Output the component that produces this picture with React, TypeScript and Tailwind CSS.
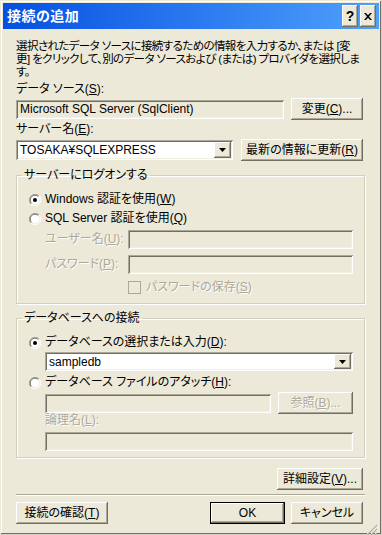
import React from "react";

const raised =
  "shadow-[inset_-1px_-1px_#716F64,inset_1px_1px_#fff,inset_-2px_-2px_#ACA899]";
const raisedDefault =
  "shadow-[inset_0_0_0_1px_#000,inset_-2px_-2px_#716F64,inset_2px_2px_#fff,inset_-3px_-3px_#ACA899]";
const sunken =
  "shadow-[inset_1px_1px_#ACA899,inset_-1px_-1px_#fff,inset_2px_2px_#716F64,inset_-2px_-2px_#F1EFE2]";
const disabledText = "text-[#ACA899] [text-shadow:1px_1px_#fff]";

function Btn({
  children,
  className = "",
  isDefault = false,
  disabled = false,
}: {
  children: React.ReactNode;
  className?: string;
  isDefault?: boolean;
  disabled?: boolean;
}) {
  return (
    <div
      className={`flex h-[22px] shrink-0 items-center justify-center whitespace-nowrap bg-[#ECE9D8] leading-none ${
        isDefault ? raisedDefault : raised
      } ${disabled ? disabledText : ""} ${className}`}
    >
      {children}
    </div>
  );
}

function Field({
  children,
  className = "",
  white = false,
}: {
  children?: React.ReactNode;
  className?: string;
  white?: boolean;
}) {
  return (
    <div
      className={`flex h-[19px] shrink-0 items-center overflow-hidden whitespace-nowrap pl-[4px] leading-none ${sunken} ${
        white ? "bg-white" : "bg-[#ECE9D8]"
      } ${className}`}
    >
      {children}
    </div>
  );
}

function Combo({ value, className = "" }: { value: string; className?: string }) {
  return (
    <div className={`flex h-[20px] shrink-0 items-center bg-white p-[2px] ${sunken} ${className}`}>
      <span className="flex-1 pl-[2px] leading-none">{value}</span>
      <div className={`flex h-full w-[17px] items-center justify-center bg-[#ECE9D8] ${raised}`}>
        <svg width="7" height="4" viewBox="0 0 7 4">
          <path d="M0 0h7L3.5 4z" fill="#000" />
        </svg>
      </div>
    </div>
  );
}

function Radio({ checked = false }: { checked?: boolean }) {
  return (
    <svg width="12" height="12" viewBox="0 0 12 12" className="shrink-0">
      <circle cx="6" cy="6" r="5" fill="#fff" />
      <path d="M1.9 10.1A5.8 5.8 0 0 1 10.1 1.9" fill="none" stroke="#ACA899" strokeWidth="1" />
      <path d="M2.6 9.4A4.8 4.8 0 0 1 9.4 2.6" fill="none" stroke="#716F64" strokeWidth="1" />
      <path d="M10.1 1.9A5.8 5.8 0 0 1 1.9 10.1" fill="none" stroke="#fff" strokeWidth="1" />
      <path d="M9.4 2.6A4.8 4.8 0 0 1 2.6 9.4" fill="none" stroke="#F1EFE2" strokeWidth="1" />
      {checked && <circle cx="6" cy="6" r="2" fill="#000" />}
    </svg>
  );
}

function Group({
  title,
  className = "",
  children,
}: {
  title: string;
  className?: string;
  children: React.ReactNode;
}) {
  return (
    <fieldset
      className={`shrink-0 border border-[#D0D0BF] shadow-[inset_1px_1px_#fff,1px_1px_#fff] ${className}`}
    >
      <legend className="ml-[5px] h-[13px] px-[2px] leading-[13px]">{title}</legend>
      {children}
    </fieldset>
  );
}

function Line({ children, className = "" }: { children: React.ReactNode; className?: string }) {
  return <div className={`h-[13px] whitespace-nowrap leading-[13px] ${className}`}>{children}</div>;
}

export default function App() {
  return (
    <div className="flex h-[535px] w-[382px] flex-col overflow-hidden bg-[#ECE9D8] p-[3px] font-['Liberation_Sans','Noto_Sans_CJK_JP',sans-serif] text-[12px] text-black [font-feature-settings:'palt'] shadow-[inset_-1px_-1px_#D4D0C8,inset_1px_1px_#ECE9D8,inset_-2px_-2px_#716F64,inset_2px_2px_#fff]">
      {/* title bar */}
      <div className="flex h-[26px] shrink-0 items-center bg-gradient-to-r from-[#0450E0] via-[#2A78F0] to-[#4FA0FB] pl-[4px] pr-[3px]">
        <span className="flex-1 text-[14px] font-bold tracking-[0.5px] text-white">接続の追加</span>
        <Btn className="h-[21px] w-[16px] text-[14px] font-bold">?</Btn>
        <Btn className="ml-[2px] h-[21px] w-[16px]">
          <svg width="8" height="7" viewBox="0 0 8 7">
            <path d="M0 0h2l2 2.3L6 0h2L5 3.5 8 7H6L4 4.7 2 7H0l3-3.5z" fill="#000" />
          </svg>
        </Btn>
      </div>

      <div className="flex flex-1 flex-col pl-[13px] pr-[14px]">
        <div className="mt-[11px] text-[11.5px] tracking-[-0.6px]">
          <Line>選択されたデータ ソースに接続するための情報を入力するか、または [変</Line>
          <Line>更] をクリックして、別のデータ ソースおよび (または) プロバイダを選択しま</Line>
          <Line>す。</Line>
        </div>

        <Line className="mt-[4px]">
          データ ソース(<u>S</u>):
        </Line>
        <div className="mt-[2px] flex h-[22px] shrink-0 items-center">
          <Field className="w-[268px]">Microsoft SQL Server (SqlClient)</Field>
          <Btn className="ml-[7px] w-[72px]">
            変更(<u>C</u>)...
          </Btn>
        </div>

        <Line className="mt-[3px]">
          サーバー名(<u>E</u>):
        </Line>
        <div className="mt-[3px] flex h-[22px] shrink-0 items-center">
          <Combo value="TOSAKA¥SQLEXPRESS" className="w-[217px]" />
          <Btn className="ml-[8px] w-[122px]">
            最新の情報に更新(<u>R</u>)
          </Btn>
        </div>

        <Group title="サーバーにログオンする" className="mt-[8px] h-[135px]">
          <div className="mt-[11px] flex h-[13px] items-center gap-[4px] pl-[12px] leading-[13px]">
            <Radio checked />
            <span>
              Windows 認証を使用(<u>W</u>)
            </span>
          </div>
          <div className="mt-[6px] flex h-[13px] items-center gap-[4px] pl-[12px] leading-[13px]">
            <Radio />
            <span>
              SQL Server 認証を使用(<u>Q</u>)
            </span>
          </div>
          <div className="mt-[5px] flex h-[19px] items-center pl-[28px] leading-[13px]">
            <span className={`w-[83px] whitespace-nowrap ${disabledText}`}>
              ユーザー名(<u>U</u>):
            </span>
            <Field className="w-[225px]" />
          </div>
          <div className="mt-[6px] flex h-[19px] items-center pl-[28px] leading-[13px]">
            <span className={`w-[83px] whitespace-nowrap ${disabledText}`}>
              パスワード(<u>P</u>):
            </span>
            <Field className="w-[225px]" />
          </div>
          <div className="mt-[7px] flex h-[13px] items-center gap-[5px] pl-[111px] leading-[13px]">
            <div className="h-[13px] w-[13px] shrink-0 border border-[#ACA899] bg-[#ECE9D8]" />
            <span className={`whitespace-nowrap ${disabledText}`}>
              パスワードの保存(<u>S</u>)
            </span>
          </div>
        </Group>

        <Group title="データベースへの接続" className="mt-[8px] h-[146px]">
          <div className="mt-[11px] flex h-[13px] items-center gap-[4px] pl-[12px] leading-[13px]">
            <Radio checked />
            <span>
              データベースの選択または入力(<u>D</u>):
            </span>
          </div>
          <Combo value="sampledb" className="ml-[28px] mt-[3px] !h-[19px] w-[308px]" />
          <div className="mt-[5px] flex h-[13px] items-center gap-[4px] pl-[12px] leading-[13px]">
            <Radio />
            <span>
              データベース ファイルのアタッチ(<u>H</u>):
            </span>
          </div>
          <div className="mt-[3px] flex h-[22px] items-center pl-[28px]">
            <Field className="w-[226px]" />
            <Btn disabled className="ml-[7px] w-[75px]">
              参照(<u>B</u>)...
            </Btn>
          </div>
          <Line className={`pl-[28px] ${disabledText}`}>
            論理名(<u>L</u>):
          </Line>
          <Field className="ml-[28px] mt-[5px] w-[308px]" />
        </Group>

        <div className="mt-[10px] flex shrink-0 justify-end pr-[2px]">
          <Btn className="w-[86px]">
            詳細設定(<u>V</u>)...
          </Btn>
        </div>

        <div className="mt-[4px] h-[2px] shrink-0 border-t border-[#ACA899] bg-white" />

        <div className="mt-[6px] flex shrink-0 items-center pr-[2px]">
          <Btn className="w-[92px]">
            接続の確認(<u>T</u>)
          </Btn>
          <div className="flex-1" />
          <Btn isDefault className="w-[75px]">
            OK
          </Btn>
          <Btn className="ml-[6px] w-[72px]">キャンセル</Btn>
        </div>

        <div className="flex flex-1 items-end justify-end pb-[1px]">
          <svg width="12" height="12" viewBox="0 0 12 12" className="-mr-[12px]">
            <path d="M11 1L1 11M11 5L5 11M11 9L9 11" stroke="#fff" strokeWidth="1" />
            <path d="M12 1L1 12M12 5L5 12M12 9L9 12" stroke="#ACA899" strokeWidth="1.2" />
          </svg>
        </div>
      </div>
    </div>
  );
}
